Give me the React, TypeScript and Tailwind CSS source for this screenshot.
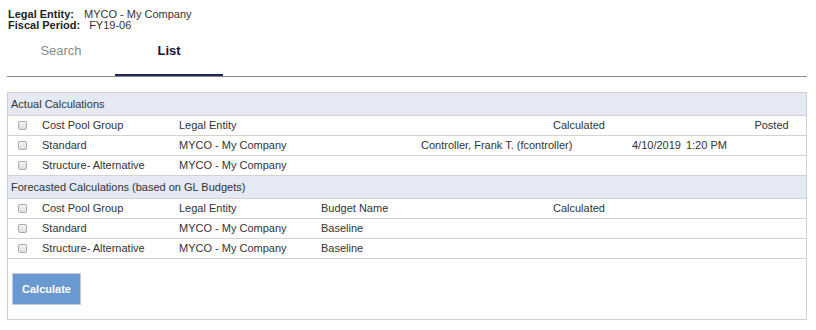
import React from 'react';

const cols = 'grid grid-cols-[34px_137px_142px_100px_211px_105px_1fr]';

const Check: React.FC = () => (
  <span className="block w-[9px] h-[9px] ml-[10px] rounded-[2px] border border-[#a9a9a9] bg-gradient-to-b from-[#f4f4f4] to-[#dedede]" />
);

interface Row {
  group: string;
  entity: string;
  budget?: string;
  user?: string;
  date?: string;
  time?: string;
}

const actualRows: Row[] = [
  { group: 'Standard', entity: 'MYCO - My Company', user: 'Controller, Frank T. (fcontroller)', date: '4/10/2019', time: '1:20 PM' },
  { group: 'Structure- Alternative', entity: 'MYCO - My Company' },
];

const forecastRows: Row[] = [
  { group: 'Standard', entity: 'MYCO - My Company', budget: 'Baseline' },
  { group: 'Structure- Alternative', entity: 'MYCO - My Company', budget: 'Baseline' },
];

const SectionHeader: React.FC<{ title: string }> = ({ title }) => (
  <div className="h-[23px] leading-[22px] bg-[#e4e9f3] border-b border-[#d3d3d3] pl-[3px]">{title}</div>
);

const DataRow: React.FC<{ row: Row }> = ({ row }) => (
  <div className={`${cols} h-[20px] leading-[19px] border-b border-[#d3d3d3] items-start`}>
    <div className="h-[19px] flex items-center"><Check /></div>
    <div>{row.group}</div>
    <div>{row.entity}</div>
    <div>{row.budget ?? ''}</div>
    <div>{row.user ?? ''}</div>
    <div>
      {row.date && (
        <>
          <span>{row.date}</span>
          <span className="ml-[5px]">{row.time}</span>
        </>
      )}
    </div>
    <div />
  </div>
);

export default function App() {
  return (
    <div className="w-[816px] h-[330px] bg-white text-[11px] text-[#333] font-['Liberation_Sans',Arial,sans-serif] overflow-hidden">
      {/* Context header */}
      <div className="pl-[8px] pt-[9px] leading-[11px]">
        <div>
          <span className="font-bold text-[#222]">Legal Entity:</span>
          <span className="ml-[10px]">MYCO - My Company</span>
        </div>
        <div>
          <span className="font-bold text-[#222]">Fiscal Period:</span>
          <span className="ml-[9px]">FY19-06</span>
        </div>
      </div>

      {/* Tabs */}
      <div className="ml-[7px] w-[800px] flex border-b border-[#8a8a8a]">
        <div className="w-[108px] h-[45px] pt-[13px] leading-[13px] text-[13px] text-center text-[#8c8c8c]">Search</div>
        <div className="w-[108px] h-[45px] pt-[13px] leading-[13px] text-[13px] text-center font-bold text-[#141a33] border-b-2 border-[#1e2552]">List</div>
      </div>

      {/* Calculations panel */}
      <div className="ml-[7px] mt-[15px] w-[800px] border border-[#d0d0d0]">
        <SectionHeader title="Actual Calculations" />
        <div className={`${cols} h-[20px] leading-[19px] border-b border-[#d3d3d3] items-start`}>
          <div className="h-[19px] flex items-center"><Check /></div>
          <div>Cost Pool Group</div>
          <div>Legal Entity</div>
          <div />
          <div className="col-span-2 text-center">Calculated</div>
          <div className="text-center">Posted</div>
        </div>
        {actualRows.map((r, i) => <DataRow key={i} row={r} />)}

        <SectionHeader title="Forecasted Calculations (based on GL Budgets)" />
        <div className={`${cols} h-[20px] leading-[19px] border-b border-[#d3d3d3] items-start`}>
          <div className="h-[19px] flex items-center"><Check /></div>
          <div>Cost Pool Group</div>
          <div>Legal Entity</div>
          <div>Budget Name</div>
          <div className="col-span-2 text-center">Calculated</div>
          <div />
        </div>
        {forecastRows.map((r, i) => <DataRow key={i} row={r} />)}

        <div className="pt-[14px] pb-[14px] pl-[4px]">
          <button className="w-[69px] h-[32px] bg-[#6a98d1] border border-[#c3cbd8] text-white font-bold text-[11px]">
            Calculate
          </button>
        </div>
      </div>
    </div>
  );
}
